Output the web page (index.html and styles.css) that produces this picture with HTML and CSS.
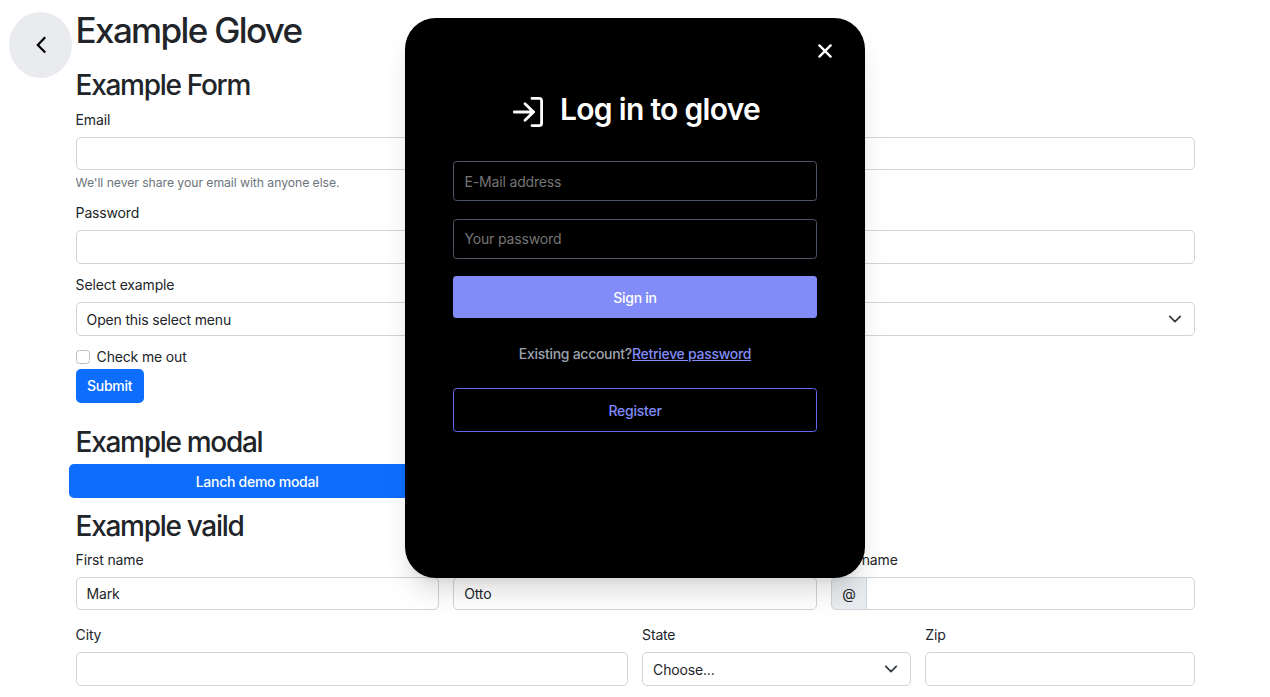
FILE: index.html
```
<!DOCTYPE html>
<html lang="en">
<head>
<meta charset="utf-8">
<title>Example Glove</title>
<link rel="stylesheet" href="styles.css">
</head>
<body>
<button class="back" aria-label="Back">
  <svg width="12" height="18" viewBox="0 0 12 18" fill="none" stroke="#000" stroke-width="2.2"><path d="M10.2 1.2 2.8 8.9l7.4 7.7"/></svg>
</button>
<main class="container">
  <h1 class="title">Example Glove</h1>
  <h2 class="heading">Example Form</h2>
  <form class="form">
    <label class="label">Email</label>
    <div class="input input-short"></div>
    <div class="help">We'll never share your email with anyone else.</div>
    <label class="label">Password</label>
    <div class="input"></div>
    <label class="label label-spaced">Select example</label>
    <div class="input select"><span>Open this select menu</span>
      <svg class="caret" viewBox="0 0 16 16" fill="none" stroke="#343a40" stroke-width="2" stroke-linecap="round" stroke-linejoin="round"><path d="m2 5 6 6 6-6"/></svg>
    </div>
    <div class="check"><span class="box"></span><span>Check me out</span></div>
    <button type="button" class="btn submit">Submit</button>
  </form>
  <h2 class="heading heading-modal">Example modal</h2>
  <button class="btn launch">Lanch demo modal</button>
  <h2 class="heading heading-valid">Example vaild</h2>
  <div class="grid">
    <div class="third"><label class="label">First name</label><div class="input input-short">Mark</div></div>
    <div class="third"><label class="label">Last name</label><div class="input input-short">Otto</div></div>
    <div class="third"><label class="label">Username</label>
      <div class="group"><span class="addon">@</span><div class="input input-short"></div></div>
    </div>
    <div class="half"><label class="label">City</label><div class="input"></div></div>
    <div class="quarter"><label class="label">State</label>
      <div class="input select"><span>Choose...</span>
        <svg class="caret" viewBox="0 0 16 16" fill="none" stroke="#343a40" stroke-width="2" stroke-linecap="round" stroke-linejoin="round"><path d="m2 5 6 6 6-6"/></svg>
      </div>
    </div>
    <div class="quarter"><label class="label">Zip</label><div class="input"></div></div>
  </div>
</main>
<div class="modal" role="dialog">
  <button class="close" aria-label="Close">
    <svg width="14" height="14" viewBox="0 0 14 14" stroke="#fff" stroke-width="2.4" stroke-linecap="round"><path d="m1.4 1.4 11.2 11.2M12.6 1.4 1.4 12.6"/></svg>
  </button>
  <div class="modal-title">
    <svg width="32" height="32" viewBox="0 0 32 32" fill="none" stroke="#fff" stroke-width="2.8" stroke-linecap="round" stroke-linejoin="round"><path d="M2.3 16h19.4M13 7.8 21.5 16 13 24.2M20 2.4h7.2q2.4 0 2.4 2.4v22.4q0 2.4-2.4 2.4H20"/></svg>
    <span class="modal-name">Log in to glove</span>
  </div>
  <div class="field">E-Mail address</div>
  <div class="field field-password">Your password</div>
  <button class="signin">Sign in</button>
  <p class="account"><span>Existing account?</span><a class="link">Retrieve password</a></p>
  <button class="register">Register</button>
</div>
</body>
</html>
```
FILE: styles.css
```
* { box-sizing: border-box; }
body {
  margin: 0;
  height: 697px;
  overflow: hidden;
  background: #fff;
  color: #212529;
  font: 14px/20px Inter, "Liberation Sans", sans-serif;
  letter-spacing: -0.16px;
}
button { border: 0; padding: 0; font: inherit; letter-spacing: inherit; }
.back {
  position: absolute;
  left: 9px;
  top: 12px;
  width: 63px;
  height: 66px;
  border-radius: 50%;
  background: #e9ebef;
  display: flex;
  align-items: center;
  justify-content: center;
}
.container { width: 1119px; margin-left: 75.6px; padding-top: 9px; }
.title { margin: 0 0 17px; font-size: 35px; line-height: 42px; font-weight: 550; letter-spacing: -1.65px; }
.heading { margin: 0 0 8px; font-size: 28px; line-height: 34px; font-weight: 550; letter-spacing: -1.3px; }
.heading-modal { margin: 22px 0 5px; }
.heading-valid { margin: 11px 0 7px; }
.label { display: block; margin-bottom: 7px; }
.label-spaced { margin-top: 11px; }
.input {
  display: flex;
  align-items: center;
  height: 34px;
  padding: 1px 10px 0;
  border: 1px solid #ced4da;
  border-radius: 5px;
  background: #fff;
}
.input-short { height: 33px; }
.select { justify-content: space-between; padding-right: 12px; }
.caret { width: 14px; height: 14px; margin-bottom: 1px; }
.help { margin: 3px 0 10px; font-size: 12.25px; letter-spacing: -0.07px; color: #6c757d; }
.check { display: flex; align-items: center; gap: 7px; margin: 11px 0 2px; }
.box { width: 14px; height: 14px; border: 1px solid #bfbfbf; border-radius: 3.5px; }
.btn {
  display: block;
  height: 34px;
  border-radius: 5px;
  background: #0d6efd;
  color: #fff;
  font-weight: 500;
  letter-spacing: -0.27px;
}
.submit { width: 68px; }
.launch { width: 377px; margin-left: -7px; padding-top: 2px; }
.grid { display: grid; grid-template-columns: repeat(12, 1fr); column-gap: 14px; row-gap: 15px; }
.third { grid-column: span 4; }
.half { grid-column: span 6; }
.quarter { grid-column: span 3; }
.group { display: flex; }
.group .input { flex: 1; border-radius: 0 5px 5px 0; }
.addon {
  width: 36px;
  margin-right: -1px;
  display: flex;
  align-items: center;
  justify-content: center;
  border: 1px solid #ced4da;
  border-radius: 5px 0 0 5px;
  background: #e9ecef;
}
.modal {
  position: absolute;
  left: 405px;
  top: 18px;
  width: 460px;
  height: 560px;
  padding: 78px 48px 0;
  border-radius: 31px;
  background: #000;
  box-shadow: 0 18px 26px -4px rgba(0, 0, 0, .13), 0 7px 9px -5px rgba(0, 0, 0, .08);
}
.close { position: absolute; right: 33px; top: 26px; width: 14px; height: 14px; background: none; display: flex; }
.modal-title { display: flex; height: 31px; margin: 0 0 34px; padding-left: 59px; gap: 16px; color: #fff; }
.modal-name { font-size: 30px; line-height: 26px; font-weight: 600; letter-spacing: -0.7px; white-space: nowrap; }
.field {
  height: 40px;
  margin-bottom: 18px;
  padding: 10px 10.5px 0;
  border: 1px solid #4b5563;
  border-radius: 3.5px;
  color: #757575;
}
.field-password { padding-top: 9px; }
.signin, .register {
  display: block;
  width: 364px;
  padding-top: 2px;
  font-weight: 500;
  letter-spacing: -0.25px;
  border-radius: 3.5px;
}
.signin { height: 42px; margin-top: -1px; background: #818cf8; color: #fff; }
.account {
  display: flex;
  justify-content: center;
  margin: 26px 0 24px;
  color: #9ca3af;
  font-weight: 500;
  letter-spacing: -0.29px;
}
.link { color: #818cf8; text-decoration: underline; }
.register { height: 44px; border: 1px solid #6366f1; background: #000; color: #818cf8; }
```
